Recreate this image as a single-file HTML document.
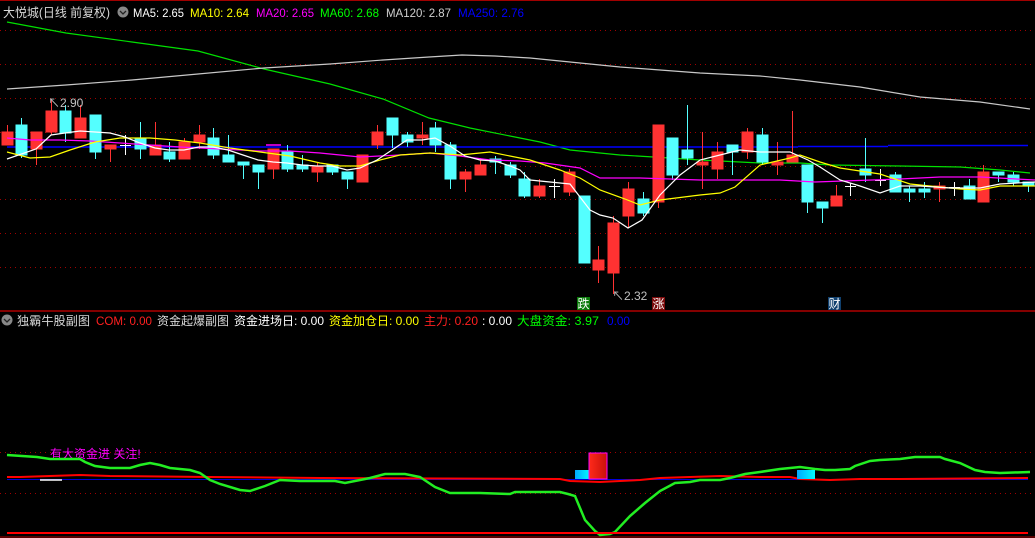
<!DOCTYPE html>
<html><head><meta charset="utf-8"><style>
html,body{margin:0;padding:0;background:#000;width:1035px;height:538px;overflow:hidden}
svg{display:block}
text{font-family:"Liberation Sans","Noto Sans CJK SC",sans-serif}
</style></head><body>
<svg width="1035" height="538" viewBox="0 0 1035 538" xmlns="http://www.w3.org/2000/svg">
<defs>
<linearGradient id="cy" x1="0" x2="1"><stop offset="0" stop-color="#00a8ff"/><stop offset="1" stop-color="#00ffff"/></linearGradient>
<linearGradient id="rd" x1="0" x2="1"><stop offset="0" stop-color="#ff2a1a"/><stop offset="1" stop-color="#c8100a"/></linearGradient>
</defs>
<rect width="1035" height="538" fill="#000"/>
<line x1="0" y1="0.5" x2="1035" y2="0.5" stroke="#a00000"/>
<g stroke="#a00000" stroke-dasharray="1,4" stroke-width="1">
<line x1="0" y1="30.5" x2="1035" y2="30.5"/><line x1="0" y1="64.5" x2="1035" y2="64.5"/>
<line x1="0" y1="98.5" x2="1035" y2="98.5"/><line x1="0" y1="132.5" x2="1035" y2="132.5"/>
<line x1="0" y1="166.5" x2="1035" y2="166.5"/><line x1="0" y1="199.5" x2="1035" y2="199.5"/>
<line x1="0" y1="233.5" x2="1035" y2="233.5"/><line x1="0" y1="267.5" x2="1035" y2="267.5"/>
<line x1="0" y1="452.5" x2="1035" y2="452.5"/><line x1="0" y1="493.5" x2="1035" y2="493.5"/>
</g>
<line x1="0" y1="311" x2="1035" y2="311" stroke="#b00000" stroke-width="1.5"/>

<polyline fill="none" stroke="#00e000" stroke-width="1.2" points="7,22 66,33 132,42 198,51 264,69 330,84 383,99 429,118 470,128 520,138 540,142 570,150 620,155 670,158 700,160 760,163 800,163 830,165 900,166 960,167 1000,170 1030,173"/>
<polyline fill="none" stroke="#c8c8c8" stroke-width="1.2" points="7,89 66,85 132,80 198,74 264,68 330,64 383,60 429,57 462,55 495,56 530,58 570,62 620,67 700,73 760,76 800,80 860,87 920,97 980,102 1030,109"/>
<line x1="7" y1="147" x2="798" y2="147" stroke="#0000ff" stroke-width="1.5"/>
<line x1="798" y1="146.5" x2="888" y2="146.5" stroke="#0000ff" stroke-width="1.5"/>
<line x1="888" y1="145.5" x2="1028" y2="145.5" stroke="#0000ff" stroke-width="1.5"/>
<line x1="266" y1="145" x2="281" y2="145" stroke="#ff00ff" stroke-width="1.5"/>

<g stroke-width="1">
<g stroke="#ff3232" fill="#ff3232">
<line x1="7.5" y1="125" x2="7.5" y2="145"/><rect x="2" y="132" width="11" height="13"/>
<line x1="36.5" y1="132" x2="36.5" y2="165"/><rect x="31" y="132" width="11" height="17"/>
<line x1="51.5" y1="100" x2="51.5" y2="135"/><rect x="46" y="111" width="11" height="21"/>
<line x1="80.5" y1="105" x2="80.5" y2="138"/><rect x="75" y="118" width="11" height="20"/>
<line x1="110.5" y1="145" x2="110.5" y2="162"/><rect x="105" y="145" width="11" height="4"/>
<line x1="155.5" y1="122" x2="155.5" y2="155"/><rect x="150" y="145" width="11" height="10"/>
<line x1="184.5" y1="138" x2="184.5" y2="159"/><rect x="179" y="142" width="11" height="17"/>
<line x1="199.5" y1="125" x2="199.5" y2="149"/><rect x="194" y="135" width="11" height="7"/>
<line x1="273.5" y1="149" x2="273.5" y2="179"/><rect x="268" y="149" width="11" height="20"/>
<line x1="317.5" y1="162" x2="317.5" y2="182"/><rect x="312" y="166" width="11" height="6"/>
<rect x="357" y="155" width="11" height="27"/>
<line x1="377.5" y1="125" x2="377.5" y2="149"/><rect x="372" y="132" width="11" height="13"/>
<line x1="422.5" y1="122" x2="422.5" y2="145"/><rect x="417" y="135" width="11" height="3"/>
<line x1="465.5" y1="169" x2="465.5" y2="192"/><rect x="460" y="172" width="11" height="7"/>
<line x1="480.5" y1="158" x2="480.5" y2="175"/><rect x="475" y="165" width="11" height="10"/>
<line x1="539.5" y1="179" x2="539.5" y2="198"/><rect x="534" y="186" width="11" height="10"/>
<line x1="569.5" y1="169" x2="569.5" y2="196"/><rect x="564" y="172" width="11" height="20"/>
<line x1="598.5" y1="246" x2="598.5" y2="283"/><rect x="593" y="260" width="11" height="10"/>
<line x1="613.5" y1="216" x2="613.5" y2="294"/><rect x="608" y="223" width="11" height="50"/>
<line x1="628.5" y1="182" x2="628.5" y2="228"/><rect x="623" y="189" width="11" height="27"/>
<line x1="658.5" y1="125" x2="658.5" y2="208"/><rect x="653" y="125" width="11" height="77"/>
<line x1="702.5" y1="132" x2="702.5" y2="189"/><rect x="697" y="162" width="11" height="3"/>
<line x1="717.5" y1="142" x2="717.5" y2="179"/><rect x="712" y="152" width="11" height="17"/>
<line x1="747.5" y1="128" x2="747.5" y2="159"/><rect x="742" y="132" width="11" height="20"/>
<line x1="777.5" y1="142" x2="777.5" y2="175"/><rect x="772" y="162" width="11" height="3"/>
<line x1="792.5" y1="111" x2="792.5" y2="162"/><rect x="787" y="155" width="11" height="7"/>
<line x1="836.5" y1="185" x2="836.5" y2="206"/><rect x="831" y="196" width="11" height="10"/>
<line x1="939.5" y1="182" x2="939.5" y2="202"/><rect x="934" y="186" width="11" height="3"/>
<line x1="983.5" y1="165" x2="983.5" y2="202"/><rect x="978" y="172" width="11" height="30"/>
</g>
<g stroke="#54ffff" fill="#54ffff">
<line x1="21.5" y1="118" x2="21.5" y2="158"/><rect x="16" y="125" width="11" height="30"/>
<line x1="65.5" y1="105" x2="65.5" y2="142"/><rect x="60" y="111" width="11" height="22"/>
<line x1="95.5" y1="115" x2="95.5" y2="159"/><rect x="90" y="115" width="11" height="37"/>
<line x1="140.5" y1="122" x2="140.5" y2="159"/><rect x="135" y="138" width="11" height="11"/>
<line x1="169.5" y1="142" x2="169.5" y2="162"/><rect x="164" y="152" width="11" height="7"/>
<line x1="213.5" y1="128" x2="213.5" y2="159"/><rect x="208" y="138" width="11" height="17"/>
<line x1="228.5" y1="135" x2="228.5" y2="162"/><rect x="223" y="155" width="11" height="7"/>
<line x1="243.5" y1="162" x2="243.5" y2="179"/><rect x="238" y="162" width="11" height="3"/>
<line x1="258.5" y1="165" x2="258.5" y2="189"/><rect x="253" y="165" width="11" height="7"/>
<line x1="287.5" y1="145" x2="287.5" y2="172"/><rect x="282" y="152" width="11" height="17"/>
<line x1="302.5" y1="155" x2="302.5" y2="172"/><rect x="297" y="165" width="11" height="4"/>
<line x1="332.5" y1="165" x2="332.5" y2="175"/><rect x="327" y="165" width="11" height="7"/>
<line x1="347.5" y1="172" x2="347.5" y2="189"/><rect x="342" y="172" width="11" height="7"/>
<line x1="392.5" y1="118" x2="392.5" y2="148"/><rect x="387" y="118" width="11" height="17"/>
<line x1="407.5" y1="132" x2="407.5" y2="147"/><rect x="402" y="135" width="11" height="7"/>
<line x1="435.5" y1="122" x2="435.5" y2="152"/><rect x="430" y="128" width="11" height="17"/>
<line x1="450.5" y1="142" x2="450.5" y2="189"/><rect x="445" y="145" width="11" height="34"/>
<line x1="495.5" y1="156" x2="495.5" y2="174"/><rect x="490" y="159" width="11" height="3"/>
<line x1="510.5" y1="162" x2="510.5" y2="178"/><rect x="505" y="165" width="11" height="10"/>
<line x1="524.5" y1="172" x2="524.5" y2="198"/><rect x="519" y="179" width="11" height="17"/>
<rect x="579" y="196" width="11" height="67"/>
<line x1="643.5" y1="192" x2="643.5" y2="216"/><rect x="638" y="199" width="11" height="14"/>
<line x1="672.5" y1="138" x2="672.5" y2="180"/><rect x="667" y="138" width="11" height="37"/>
<line x1="687.5" y1="105" x2="687.5" y2="165"/><rect x="682" y="150" width="11" height="8"/>
<line x1="732.5" y1="145" x2="732.5" y2="175"/><rect x="727" y="145" width="11" height="7"/>
<line x1="762.5" y1="128" x2="762.5" y2="165"/><rect x="757" y="135" width="11" height="27"/>
<line x1="807.5" y1="165" x2="807.5" y2="213"/><rect x="802" y="165" width="11" height="37"/>
<line x1="822.5" y1="202" x2="822.5" y2="223"/><rect x="817" y="202" width="11" height="6"/>
<line x1="865.5" y1="138" x2="865.5" y2="182"/><rect x="860" y="169" width="11" height="6"/>
<line x1="895.5" y1="172" x2="895.5" y2="192"/><rect x="890" y="175" width="11" height="17"/>
<line x1="909.5" y1="186" x2="909.5" y2="202"/><rect x="904" y="189" width="11" height="3"/>
<line x1="924.5" y1="182" x2="924.5" y2="198"/><rect x="919" y="189" width="11" height="3"/>
<line x1="969.5" y1="179" x2="969.5" y2="199"/><rect x="964" y="186" width="11" height="13"/>
<line x1="998.5" y1="172" x2="998.5" y2="182"/><rect x="993" y="172" width="11" height="3"/>
<line x1="1013.5" y1="172" x2="1013.5" y2="186"/><rect x="1008" y="175" width="11" height="7"/>
<line x1="1028.5" y1="182" x2="1028.5" y2="192"/><rect x="1023" y="182" width="11" height="4"/>
</g>
<g stroke="#ffffff">
<line x1="125.5" y1="135" x2="125.5" y2="155"/><line x1="120" y1="145.5" x2="131" y2="145.5"/>
<line x1="554.5" y1="179" x2="554.5" y2="198"/><line x1="549" y1="186.5" x2="560" y2="186.5"/>
<line x1="850.5" y1="183" x2="850.5" y2="196"/><line x1="845" y1="186.5" x2="856" y2="186.5"/>
<line x1="880.5" y1="169" x2="880.5" y2="186"/><line x1="875" y1="180.5" x2="886" y2="180.5"/>
<line x1="954.5" y1="182" x2="954.5" y2="196"/><line x1="949" y1="187.5" x2="960" y2="187.5"/>
</g>
</g>

<polyline fill="none" stroke="#ff00ff" stroke-width="1.2" points="7,138 30,140 60,140 90,141 120,143 150,145 180,147 200,148 220,149 260,151 290,151 320,153 340,155 360,157 400,155 430,153 460,156 490,160 520,161 545,163 580,168 600,178 640,178 700,180 780,180 815,182 900,179 940,177 980,177 1035,180"/>
<polyline fill="none" stroke="#ffff00" stroke-width="1.2" points="7,152 30,158 50,157 70,150 95,142 120,138 150,138 175,140 200,143 230,148 260,152 290,156 320,163 340,166 360,166 380,160 400,155 430,153 460,155 490,152 520,158 530,160 560,170 580,178 600,190 625,199 640,205 660,200 700,195 720,193 735,187 760,165 790,158 800,155 820,162 840,168 880,174 910,184 940,187 960,189 980,190 1000,186 1035,186"/>
<polyline fill="none" stroke="#ffffff" stroke-width="1.2" points="7,159 36,149 51,135 65,133 80,131 95,132 110,133 125,137 140,143 155,148 169,150 184,150 199,147 213,147 228,150 243,155 258,160 273,162 287,163 302,165 317,166 332,166 347,170 360,168 377,160 392,150 407,140 422,140 435,138 450,146 465,156 480,160 495,161 510,166 520,170 530,180 560,183 570,184 590,210 600,215 613,218 628,228 642,220 660,195 680,175 700,160 720,155 740,150 760,152 790,152 808,160 820,167 840,180 860,186 880,193 900,186 920,186 950,188 980,188 1000,184 1035,182"/>

<text x="48" y="107" font-size="12" fill="#c0c0c0">↖2.90</text>
<text x="612" y="300" font-size="12" fill="#c0c0c0">↖2.32</text>
<rect x="577" y="297" width="13" height="13" fill="#0a7a0a"/><text x="577.5" y="308" font-size="12" fill="#fff">跌</text>
<rect x="652" y="297" width="13" height="13" fill="#7a0a0a"/><text x="652.5" y="308" font-size="12" fill="#fff">涨</text>
<rect x="828" y="297" width="13" height="13" fill="#10406e"/><text x="828.5" y="308" font-size="12" fill="#fff">财</text>

<text x="3" y="17" font-size="12.5" fill="#d8d8d8" textLength="107" lengthAdjust="spacingAndGlyphs">大悦城(日线 前复权)</text>
<circle cx="123" cy="12" r="5.5" fill="#888"/><path d="M120,11 L123,14 L126,11" stroke="#222" stroke-width="1.3" fill="none"/>
<g font-size="12" lengthAdjust="spacingAndGlyphs">
<text x="133" y="17" fill="#fff" textLength="51" lengthAdjust="spacingAndGlyphs">MA5: 2.65</text>
<text x="190" y="17" fill="#ffff00" textLength="59" lengthAdjust="spacingAndGlyphs">MA10: 2.64</text>
<text x="256" y="17" fill="#ff00ff" textLength="58" lengthAdjust="spacingAndGlyphs">MA20: 2.65</text>
<text x="320" y="17" fill="#00ff00" textLength="59" lengthAdjust="spacingAndGlyphs">MA60: 2.68</text>
<text x="386" y="17" fill="#d0d0d0" textLength="65" lengthAdjust="spacingAndGlyphs">MA120: 2.87</text>
<text x="458" y="17" fill="#0000ff" textLength="66" lengthAdjust="spacingAndGlyphs">MA250: 2.76</text>
</g>

<circle cx="7" cy="320" r="5.5" fill="#888"/><path d="M4,319 L7,322 L10,319" stroke="#222" stroke-width="1.3" fill="none"/>
<g font-size="12">
<text x="17" y="325" fill="#d8d8d8" textLength="73" lengthAdjust="spacingAndGlyphs">独霸牛股副图</text>
<text x="96" y="325" fill="#ff2020" textLength="56" lengthAdjust="spacingAndGlyphs">COM: 0.00</text>
<text x="157" y="325" fill="#d8d8d8" textLength="72" lengthAdjust="spacingAndGlyphs">资金起爆副图</text>
<text x="234" y="325" fill="#fff" textLength="90" lengthAdjust="spacingAndGlyphs">资金进场日: 0.00</text>
<text x="329" y="325" fill="#ffff00" textLength="90" lengthAdjust="spacingAndGlyphs">资金加仓日: 0.00</text>
<text x="424" y="325" fill="#ff2020" textLength="54" lengthAdjust="spacingAndGlyphs">主力: 0.20</text>
<text x="482" y="325" fill="#fff" textLength="30" lengthAdjust="spacingAndGlyphs">: 0.00</text>
<text x="517" y="325" fill="#00ff00" textLength="82" lengthAdjust="spacingAndGlyphs">大盘资金: 3.97</text>
<text x="607" y="325" fill="#0000ff" textLength="23" lengthAdjust="spacingAndGlyphs">0.00</text>
</g>

<text x="50" y="458" font-size="12" fill="#ff00ff">有大资金进 关注!</text>
<line x1="7" y1="479.5" x2="1028" y2="479.5" stroke="#0000dd" stroke-width="1"/>
<polyline fill="none" stroke="#ff0000" stroke-width="2" points="7,477 20,477 50,476 80,475 110,476 210,477 320,478 560,479 570,481 600,482 620,481 640,480 660,478 690,477 720,476 760,477 790,477 800,479 830,480 860,479 900,479 1028,478"/>
<line x1="40" y1="480" x2="62" y2="480" stroke="#fff" stroke-width="1.5"/>
<polyline fill="none" stroke="#22ee22" stroke-width="2.5" points="7,455 37,457 50,459 80,459 85,462 95,466 110,468 130,468 140,465 150,463 160,465 170,468 190,470 200,473 210,480 220,484 240,490 250,491 265,486 280,480 300,481 335,481 345,483 360,480 370,478 385,474 405,474 420,477 435,487 450,493 480,493 510,494 515,492 560,492 568,494 575,496 585,520 595,531 600,535 610,534 615,532 630,516 645,503 660,491 675,483 690,482 700,480 720,480 730,478 745,474 760,472 780,469 800,467 815,469 825,470 835,470 850,469 855,466 870,461 880,460 900,459 915,457 940,457 945,459 960,463 975,470 985,472 1000,473 1030,472"/>
<rect x="575" y="470" width="15" height="9" fill="url(#cy)"/>
<rect x="589" y="453" width="18" height="26" fill="url(#rd)" stroke="#ff00ff" stroke-width="1"/>
<rect x="797" y="470" width="18" height="9" fill="url(#cy)"/>
<line x1="7" y1="533" x2="1028" y2="533" stroke="#ff0000" stroke-width="2"/>
<line x1="0" y1="537" x2="1035" y2="537" stroke="#b00000" stroke-width="1"/>
</svg>
</body></html>
